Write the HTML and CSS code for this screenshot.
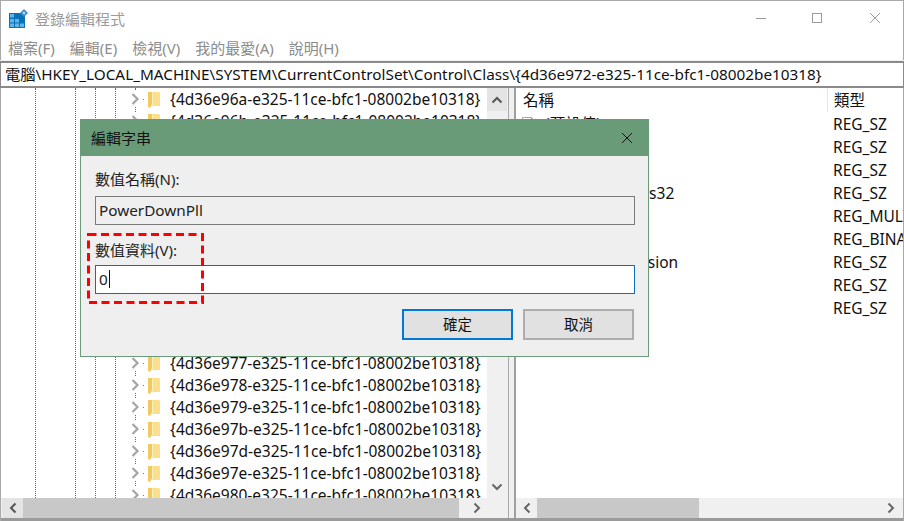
FILE: index.html
```html
<!DOCTYPE html>
<html lang="zh-Hant">
<head>
<meta charset="utf-8">
<title>登錄編輯程式</title>
<link rel="stylesheet" href="styles.css">
</head>
<body>
<div class="window">
  <header class="titlebar">
    <svg class="app-icon" width="20" height="20" viewBox="0 0 20 20">
      <rect x="0" y="5" width="16" height="15" fill="#0a70b8"/>
      <g fill="#5fb4ea">
        <rect x="1" y="6" width="4" height="3.5"/><rect x="1" y="11" width="4" height="3.5"/><rect x="1" y="15.5" width="4" height="3.5"/>
        <rect x="6" y="11" width="4" height="3.5"/><rect x="6" y="15.5" width="4" height="3.5"/>
        <rect x="11" y="15.5" width="4" height="3.5"/>
      </g>
      <path d="M15 1l4 4-4 4-4-4z" fill="#3f8fd0"/>
      <path d="M15 3.5l1.5 1.5-1.5 1.5-1.5-1.5z" fill="#cfe6f7"/>
    </svg>
    <span class="title">登錄編輯程式</span>
    <div class="controls">
      <svg class="ctl-min" width="12" height="12" viewBox="0 0 12 12"><path d="M1 6.5h10" stroke="#9a9a9a" fill="none"/></svg>
      <svg width="12" height="12" viewBox="0 0 12 12"><rect x="1.5" y="1.5" width="9" height="9" stroke="#9a9a9a" fill="none"/></svg>
      <svg width="12" height="12" viewBox="0 0 12 12"><path d="M1 1l10 10M11 1L1 11" stroke="#9a9a9a" fill="none"/></svg>
    </div>
  </header>
  <nav class="menubar">
    <span>檔案(F)</span><span>編輯(E)</span><span>檢視(V)</span><span>我的最愛(A)</span><span>說明(H)</span>
  </nav>
  <div class="address">電腦\HKEY_LOCAL_MACHINE\SYSTEM\CurrentControlSet\Control\Class\{4d36e972-e325-11ce-bfc1-08002be10318}</div>
  <main class="panes">
    <section class="pane tree-pane">
      <div class="tree-body">
        <div class="tree" id="tree">
          <i class="guide g1"></i><i class="guide g2"></i><i class="guide g3"></i><i class="guide g4"></i><i class="guide g5"></i>
        </div>
        <div class="vscroll">
          <span class="sb-btn"><svg width="12" height="8" viewBox="0 0 12 8"><path d="M1.5 6.5L6 2l4.500 4.500" stroke="#555" stroke-width="2" fill="none"/></svg></span>
          <span class="sb-track"></span>
          <span class="sb-btn plain"><svg width="12" height="8" viewBox="0 0 12 8"><path d="M1.500 1.500L6 6l4.500-4.500" stroke="#666" stroke-width="2" fill="none"/></svg></span>
        </div>
      </div>
      <div class="hscroll tree-hscroll">
        <span class="hs-btn active"><svg width="8" height="12" viewBox="0 0 8 12"><path d="M6.500 1.500L2 6l4.500 4.500" stroke="#555" stroke-width="2" fill="none"/></svg></span>
        <span class="hs-thumb left-thumb"></span>
        <span class="hs-btn"><svg width="8" height="12" viewBox="0 0 8 12"><path d="M1.500 1.500L6 6l-4.500 4.500" stroke="#666" stroke-width="2" fill="none"/></svg></span>
      </div>
    </section>
    <section class="pane list-pane">
      <div class="list-head"><span class="col-name">名稱</span><span class="col-type">類型</span></div>
      <div class="list-rows">
        <div class="list-row"><span class="col-name"><svg class="file" width="16" height="16" viewBox="0 0 16 16"><path d="M1.500 1.500h9l4 4v10h-13z" fill="#fff" stroke="#a8a8a8"/><path d="M10.500 1.500v4h4z" fill="#e4e4e4" stroke="#a8a8a8"/><rect x="5" y="3" width="3" height="3" fill="#e08a3c"/></svg>(預設值)</span><span class="col-type">REG_SZ</span></div>
        <div class="list-row"><span class="col-name"></span><span class="col-type">REG_SZ</span></div>
        <div class="list-row"><span class="col-name"></span><span class="col-type">REG_SZ</span></div>
        <div class="list-row"><span class="col-name tail">OpenGLDrivers32</span><span class="col-type">REG_SZ</span></div>
        <div class="list-row"><span class="col-name"></span><span class="col-type">REG_MULTI_SZ</span></div>
        <div class="list-row"><span class="col-name"></span><span class="col-type">REG_BINARY</span></div>
        <div class="list-row"><span class="col-name tail">UserDriverVersion</span><span class="col-type">REG_SZ</span></div>
        <div class="list-row"><span class="col-name"></span><span class="col-type">REG_SZ</span></div>
        <div class="list-row"><span class="col-name"></span><span class="col-type">REG_SZ</span></div>
      </div>
      <div class="hscroll list-hscroll">
        <span class="hs-btn"><svg width="8" height="12" viewBox="0 0 8 12"><path d="M6.500 1.500L2 6l4.500 4.500" stroke="#666" stroke-width="2" fill="none"/></svg></span>
        <span class="hs-thumb right-thumb"></span>
        <span class="hs-rest"></span>
        <span class="hs-btn"><svg width="8" height="12" viewBox="0 0 8 12"><path d="M1.500 1.500L6 6l-4.500 4.500" stroke="#666" stroke-width="2" fill="none"/></svg></span>
      </div>
    </section>
  </main>

  <div class="dialog">
    <div class="dlg-title">
      <span>編輯字串</span>
      <svg width="14" height="14" viewBox="0 0 14 14"><path d="M2 2l10 10M12 2L2 12" stroke="#111" fill="none"/></svg>
    </div>
    <div class="dlg-body">
      <label class="dlg-label">數值名稱(N):</label>
      <div class="field readonly">PowerDownPll</div>
      <label class="dlg-label second">數值資料(V):</label>
      <div class="field active"><span>0</span><i class="caret"></i></div>
      <div class="dlg-actions">
        <button class="btn primary">確定</button>
        <button class="btn">取消</button>
      </div>
      <svg class="highlight" width="117" height="71" viewBox="0 0 117 71"><rect x="1.500" y="1.500" width="114" height="68" fill="none" stroke="#ff0000" stroke-width="3" stroke-dasharray="8 4.500"/></svg>
    </div>
  </div>
</div>
<script src="tree.js"></script>
</body>
</html>
```

FILE: tree.js
```js
var ids = ['96a','96b','96c','96d','96e','96f','970','971','972','973','974','975','977','978','979','97b','97d','97e','980'];
var tree = document.getElementById('tree');
ids.forEach(function (id) {
  var row = document.createElement('div');
  row.className = 'tree-row';
  row.innerHTML =
    '<svg class="chev" width="16" height="16" viewBox="0 0 16 16"><path d="M4.500 3L9.500 8 4.500 13" stroke="#a6a6a6" stroke-width="2.200" fill="none"/></svg>' +
    '<i class="dot"></i>' +
    '<svg class="folder" width="13" height="17" viewBox="0 0 13 17"><path d="M0 1h11l1 1v13H3v2H1l-1-1z" fill="#fadf8e"/><path d="M0 1h4v12l-2 3H0z" fill="#f3c85f"/><path d="M4 2h1v12H4z" fill="#fff3c4"/></svg>' +
    '<span>{4d36e' + id + '-e325-11ce-bfc1-08002be10318}</span>';
  tree.appendChild(row);
});
```

FILE: styles.css
```css
* { box-sizing: border-box; }
html, body { margin: 0; height: 100%; background: #fff; overflow: hidden; }
body { font-family: "Noto Sans", "Noto Sans CJK TC", sans-serif; font-size: 15.5px; color: #111; }

.window { position: relative; width: 904px; height: 521px; display: flex; flex-direction: column; border: 1px solid #a9a9a9; border-width: 1px 1px 0 1px; background: #fff; }

.titlebar { height: 35px; display: flex; align-items: center; padding: 0 0 1px 8px; flex: none; }
.app-icon { margin-right: 6px; }
.title { font-size: 15px; color: #9b9b9b; }
.controls { margin-left: auto; display: flex; gap: 46px; padding-right: 22px; }
.ctl-min { margin-right: -2px; }

.menubar { height: 25px; flex: none; display: flex; gap: 15px; padding: 0 0 2px 7px; align-items: center; color: #8c8c8c; font-size: 15px; }

.address { height: 27px; flex: none; border: 1px solid #8a8a8a; border-width: 2px 1px; margin: 0 -1px; padding-left: 4px; line-height: 23px; font-size: 15.3px; white-space: nowrap; overflow: hidden; background: #fff; box-shadow: 0 -1px 0 #f0f0f0; }

.panes { flex: 1; display: flex; min-height: 0; gap: 5px; background: #f0f0f0; border-bottom: 3px solid #9a9a9a; }
.pane { background: #fff; display: flex; flex-direction: column; min-width: 0; }
.tree-pane { width: 508px; flex: none; border-right: 1px solid #a9a9a9; }
.list-pane { flex: 1; border-left: 2px solid #a0a0a0; }

.tree-body { flex: 1; display: flex; min-height: 0; background: #f0f0f0; }
.tree { position: relative; flex: 1; overflow: hidden; background: #fff; }
.guide { position: absolute; top: 0; bottom: 0; width: 0; border-left: 1px dotted #666; }
.g1 { left: 34px; } .g2 { left: 74px; } .g3 { left: 94px; } .g4 { left: 114px; } .g5 { left: 134px; }

.tree-row { position: relative; height: 22px; display: flex; align-items: center; padding-left: 127px; white-space: nowrap; }
.chev { background: #fff; flex: none; }
.dot { width: 1px; height: 1px; background: #777; margin: 0 4px 0 -1px; flex: none; }
.folder { flex: none; margin-right: 9px; }

.vscroll { width: 20px; flex: none; display: flex; flex-direction: column; background: #f0f0f0; margin-right: 1px; }
.sb-btn { height: 23px; flex: none; display: flex; align-items: center; justify-content: center; background: #e4e4e4; }
.sb-btn.plain { background: #f0f0f0; }
.sb-track { flex: 1; }

.hscroll { height: 20px; flex: none; display: flex; background: #f0f0f0; }
.tree-hscroll { padding: 0 21px 0 1px; }
.list-hscroll { padding-right: 2px; }
.hs-btn { width: 21px; flex: none; display: flex; align-items: center; justify-content: center; }
.hs-btn.active { background: #e4e4e4; }
.hs-thumb { background: #c8c8c8; }
.left-thumb { flex: 1; margin-right: 7px; }
.right-thumb { width: 162px; flex: none; }
.hs-rest { flex: 1; }

.list-head { height: 24px; display: flex; align-items: center; flex: none; }
.list-rows { flex: 1; min-height: 0; }
.list-row { height: 23px; display: flex; align-items: center; white-space: nowrap; }
.col-name { width: 311px; flex: none; padding-left: 5px; display: flex; align-items: center; overflow: hidden; }
.col-type { flex: 1; padding-left: 6px; overflow: hidden; white-space: nowrap; }
.list-head .col-name { padding-left: 7px; height: 24px; line-height: 24px; display: block; }
.list-head .col-type { border-left: 1px solid #e5e5e5; height: 24px; line-height: 24px; }
.file { margin-right: 8px; flex: none; }
.tail { padding-left: 29px; }

.dialog { position: absolute; left: 79px; top: 118px; width: 569px; height: 238px; background: #efefef; border: 1px solid #6b9b78; display: flex; flex-direction: column; }
.dlg-title { height: 37px; flex: none; background: #699b78; display: flex; align-items: center; justify-content: space-between; padding: 0 15px 0 11px; color: #111; font-size: 15px; margin: -1px -1px 0; }
.dlg-body { position: relative; flex: 1; padding: 12px 13px 0 14px; display: flex; flex-direction: column; }
.dlg-label { height: 22px; line-height: 22px; font-size: 15px; color: #222; }
.dlg-label.second { margin-top: 14px; }
.field { height: 29px; margin-top: 6px; border: 1px solid #7a7a7a; padding: 0 0 2px 3px; display: flex; align-items: center; color: #222; font-size: 15.3px; }
.field.active { background: #fff; border-color: #0a6fc0; margin-top: 4px; }
.caret { width: 1px; height: 18px; background: #111; margin-left: 1px; }
.dlg-actions { display: flex; justify-content: flex-end; gap: 10px; margin-top: 15px; padding-right: 1px; }
.btn { width: 111px; height: 31px; padding: 0 0 3px; background: #e1e1e1; border: 2px solid #adadad; font: inherit; font-size: 14.5px; color: #111; }
.btn.primary { border-color: #0078d7; }
.highlight { position: absolute; left: 6px; top: 77px; }
```
